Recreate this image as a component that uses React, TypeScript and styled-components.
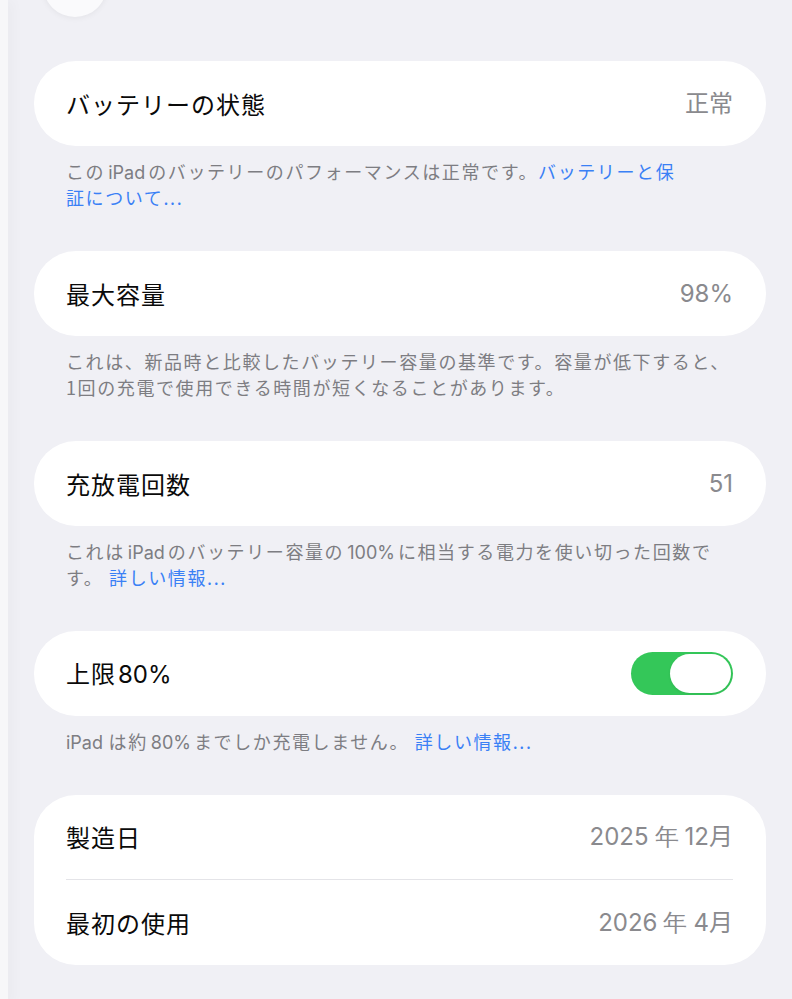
import React from "react";
import styled, { createGlobalStyle } from "styled-components";

const Global = createGlobalStyle`
  html, body { margin: 0; padding: 0; background: #f0f0f5; }
  body { font-family: "Inter", "Noto Sans CJK JP", sans-serif; -webkit-font-smoothing: antialiased; }
  * { box-sizing: border-box; }
`;

const Page = styled.div`
  display: flex;
  min-height: 999px;
  background: #f0f0f5;
`;

const EdgeStrip = styled.div`
  width: 8px;
  flex: none;
  background: #f7f7f9;
  box-shadow: 3px 0 14px rgba(0, 0, 0, 0.045);
  z-index: 1;
`;

const Main = styled.main`
  flex: 1;
  display: flex;
  flex-direction: column;
  padding: 0 26px 0 26px;
`;

const TopBar = styled.div`
  flex: none;
  height: 61px;
  display: flex;
  align-items: flex-start;
  padding-left: 9px;
`;

const RoundButton = styled.div`
  width: 64px;
  height: 64px;
  margin-top: -47px;
  border-radius: 50%;
  background: #fafafc;
  box-shadow: 0 1px 6px rgba(0, 0, 0, 0.06);
`;

const Section = styled.section`
  flex: none;
  display: flex;
  flex-direction: column;
  margin-bottom: 41px;
`;

const Card = styled.div`
  background: #ffffff;
  border-radius: 42px;
  display: flex;
  flex-direction: column;
  padding: 0 33px 0 32px;
`;

const Row = styled.div<{ $divider?: boolean }>`
  height: 85px;
  flex: none;
  display: flex;
  align-items: center;
  justify-content: space-between;
  border-bottom: ${(p) => (p.$divider ? "1px solid #e4e4e8" : "none")};
`;

const Label = styled.span`
  font-family: "Noto Sans CJK JP", sans-serif;
  font-size: 24px;
  line-height: 1;
  letter-spacing: 1px;
  color: #0a0a0a;
`;

const Value = styled.span`
  font-family: "Inter", "Noto Sans CJK JP", sans-serif;
  font-size: 24px;
  line-height: 1;
  color: #8a8a8e;
`;

const Latin = styled.span<{ $gap?: number }>`
  font-family: "Inter", sans-serif;
  letter-spacing: 0;
  line-height: 1;
  margin: 0 ${(p) => (p.$gap ?? 3)}px;
`;

const Note = styled.p`
  margin: 12px 0 0;
  padding-left: 32px;
  height: ${(p: { $lines: number }) => p.$lines * 26}px;
  font-family: "Noto Sans CJK JP", sans-serif;
  font-size: 18px;
  line-height: 26px;
  letter-spacing: 1.6px;
  color: #7d7d82;
  white-space: nowrap;
`;

const Link = styled.span`
  color: #3a80f5;
`;

const Toggle = styled.div<{ $on: boolean }>`
  width: 102px;
  height: 43px;
  border-radius: 22px;
  background: ${(p) => (p.$on ? "#34c759" : "#e5e5ea")};
  display: flex;
  align-items: center;
  justify-content: ${(p) => (p.$on ? "flex-end" : "flex-start")};
  padding: 0 2px;
`;

const Knob = styled.div`
  width: 61px;
  height: 39px;
  border-radius: 20px;
  background: #ffffff;
  box-shadow: 0 1px 3px rgba(0, 0, 0, 0.08);
`;

export default function App() {
  return (
    <>
      <Global />
      <Page>
        <EdgeStrip />
        <Main>
          <TopBar>
            <RoundButton />
          </TopBar>

          <Section>
            <Card>
              <Row>
                <Label>バッテリーの状態</Label>
                <Value>正常</Value>
              </Row>
            </Card>
            <Note $lines={2}>
              この<Latin>iPad</Latin>のバッテリーのパフォーマンスは正常です。
              <Link>
                バッテリーと保
                <br />
                証について...
              </Link>
            </Note>
          </Section>

          <Section>
            <Card>
              <Row>
                <Label>最大容量</Label>
                <Value>98%</Value>
              </Row>
            </Card>
            <Note $lines={2}>
              これは、新品時と比較したバッテリー容量の基準です。容量が低下すると、
              <br />
              1回の充電で使用できる時間が短くなることがあります。
            </Note>
          </Section>

          <Section>
            <Card>
              <Row>
                <Label>充放電回数</Label>
                <Value>51</Value>
              </Row>
            </Card>
            <Note $lines={2}>
              これは<Latin>iPad</Latin>のバッテリー容量の<Latin>100%</Latin>に相当する電力を使い切った回数で
              <br />
              す。 <Link>詳しい情報...</Link>
            </Note>
          </Section>

          <Section>
            <Card>
              <Row>
                <Label>
                  上限<Latin $gap={2}>80%</Latin>
                </Label>
                <Toggle $on>
                  <Knob />
                </Toggle>
              </Row>
            </Card>
            <Note $lines={1}>
              <Latin $gap={0}>iPad</Latin> は約<Latin>80%</Latin>までしか充電しません。 <Link>詳しい情報...</Link>
            </Note>
          </Section>

          <Section>
            <Card>
              <Row $divider>
                <Label>製造日</Label>
                <Value>
                  2025<Latin $gap={6}>年</Latin>12月
                </Value>
              </Row>
              <Row>
                <Label>最初の使用</Label>
                <Value>
                  2026<Latin $gap={6}>年</Latin>4月
                </Value>
              </Row>
            </Card>
          </Section>
        </Main>
      </Page>
    </>
  );
}
